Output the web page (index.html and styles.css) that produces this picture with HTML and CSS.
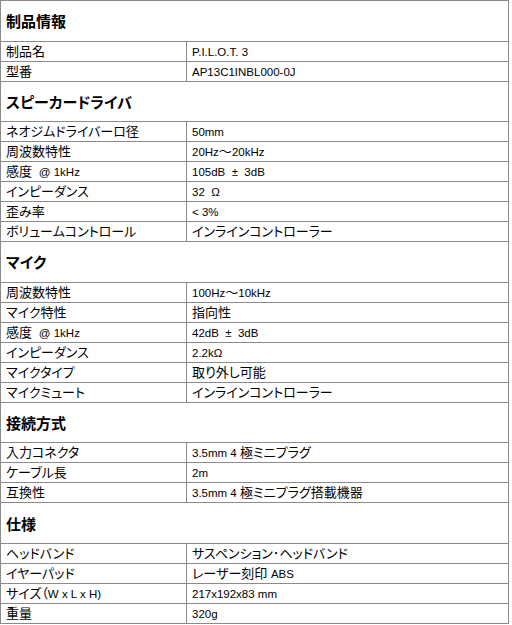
FILE: index.html
```html
<!DOCTYPE html>
<html lang="ja">
<head>
<meta charset="utf-8">
<link rel="stylesheet" href="styles.css">
</head>
<body>
<table class="spec">
  <colgroup><col class="c1"><col class="c2"></colgroup>
  <tr class="sec"><th colspan="2">制品情報</th></tr>
  <tr><td>制品名</td><td><span class="a">P.I.L.O.T. 3</span></td></tr>
  <tr><td>型番</td><td><span class="a">AP13C1INBL000-0J</span></td></tr>
  <tr class="sec"><th colspan="2">スピーカードライバ</th></tr>
  <tr><td>ネオジムドライバーロ径</td><td><span class="a">50mm</span></td></tr>
  <tr><td>周波数特性</td><td><span class="a">20Hz</span>～<span class="a">20kHz</span></td></tr>
  <tr><td>感度 <span class="a">&nbsp;@ 1kHz</span></td><td><span class="a">105dB &nbsp;± &nbsp;3dB</span></td></tr>
  <tr><td>インピーダンス</td><td><span class="a">32 &nbsp;Ω</span></td></tr>
  <tr><td>歪み率</td><td><span class="a">&lt; 3%</span></td></tr>
  <tr><td>ボリュームコントロール</td><td>インラインコントローラー</td></tr>
  <tr class="sec"><th colspan="2">マイク</th></tr>
  <tr><td>周波数特性</td><td><span class="a">100Hz</span>～<span class="a">10kHz</span></td></tr>
  <tr><td>マイク特性</td><td>指向性</td></tr>
  <tr><td>感度 <span class="a">&nbsp;@ 1kHz</span></td><td><span class="a">42dB &nbsp;± &nbsp;3dB</span></td></tr>
  <tr><td>インピーダンス</td><td><span class="a">2.2kΩ</span></td></tr>
  <tr><td>マイクタイプ</td><td>取り外し可能</td></tr>
  <tr><td>マイクミュート</td><td>インラインコントローラー</td></tr>
  <tr class="sec"><th colspan="2">接続方式</th></tr>
  <tr><td>入力コネクタ</td><td><span class="a">3.5mm 4 </span>極ミニプラグ</td></tr>
  <tr><td>ケーブル長</td><td><span class="a">2m</span></td></tr>
  <tr><td>互換性</td><td><span class="a">3.5mm 4 </span>極ミニプラグ搭載機器</td></tr>
  <tr class="sec"><th colspan="2">仕様</th></tr>
  <tr><td>ヘッドバンド</td><td>サスペンション･ヘッドバンド</td></tr>
  <tr><td>イヤーパッド</td><td>レーザー刻印 <span class="a">ABS</span></td></tr>
  <tr><td>サイズ（<span class="a">W x L x H)</span></td><td><span class="a">217x192x83 mm</span></td></tr>
  <tr><td>重量</td><td><span class="a">320g</span></td></tr>
</table>
</body>
</html>
```
FILE: styles.css
```css
html, body {
  margin: 0;
  padding: 0;
  background: #ffffff;
}
body {
  font-family: "Liberation Sans", "Noto Sans CJK JP", sans-serif;
  color: #000000;
  font-feature-settings: "palt";
}
.spec {
  border-collapse: collapse;
  width: 509px;
  table-layout: fixed;
}
.c1 { width: 186px; }
.spec td,
.spec th {
  border: 1px solid #8a8a8a;
  padding: 0 5px;
  text-align: left;
  vertical-align: middle;
}
.spec td {
  height: 19px;
  font-size: 13px;
  line-height: 19px;
  white-space: nowrap;
}
.spec th {
  height: 36.6px;
  font-size: 15px;
  font-weight: bold;
  line-height: 20px;
  padding-top: 3px;
  padding-bottom: 0;
}
.a {
  font-size: 11.5px;
  line-height: 1;
}
```
